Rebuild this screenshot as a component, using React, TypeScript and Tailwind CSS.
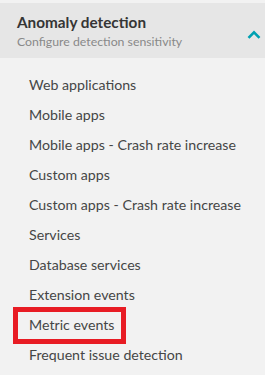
import React from "react";

const items = [
  "Web applications",
  "Mobile apps",
  "Mobile apps - Crash rate increase",
  "Custom apps",
  "Custom apps - Crash rate increase",
  "Services",
  "Database services",
  "Extension events",
  "Metric events",
  "Frequent issue detection",
];

export default function App() {
  return (
    <div className="w-[265px] h-[375px] bg-[#f2f2f2] overflow-hidden pt-[3px] font-['Lato',_'Roboto',_sans-serif]">
      <div className="h-[55px] bg-[#e6e6e6] flex items-start justify-between pl-[17px] pr-[4px] pt-[9px]">
        <div className="flex flex-col">
          <div className="text-[15.3px] leading-[20px] font-bold text-[#353535]">
            Anomaly detection
          </div>
          <div className="text-[12.3px] leading-[20px] text-[#898989]">
            Configure detection sensitivity
          </div>
        </div>
        <svg width="14" height="9" viewBox="0 0 14 9" className="mt-[18px]">
          <path d="M1.5 7.8 L7 2.3 L12.5 7.8" fill="none" stroke="#00a1b2" strokeWidth="2.6" />
        </svg>
      </div>
      <div className="flex flex-col pt-[12px]">
        {items.map((t) => (
          <div key={t} className="h-[30px] flex items-center pl-[29px] relative">
            {t === "Metric events" && (
              <div className="absolute left-[13px] top-[-3px] w-[113px] h-[37px] border-[5px] border-[#e81c24]" />
            )}
            <span className="text-[14.2px] text-[#454646]">{t}</span>
          </div>
        ))}
      </div>
    </div>
  );
}
